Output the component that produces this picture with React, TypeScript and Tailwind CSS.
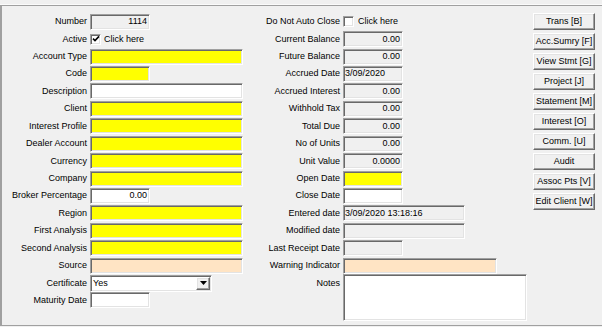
import React from "react";

const sunken =
  "border border-t-[#a0a0a0] border-l-[#a0a0a0] border-r-white border-b-white shadow-[inset_1px_1px_0_#696969,inset_-1px_-1px_0_#e3e3e3]";
const raised =
  "border border-t-white border-l-white border-r-[#696969] border-b-[#696969] shadow-[inset_-1px_-1px_0_#a0a0a0,inset_1px_1px_0_#e3e3e3]";

type FieldProps = {
  w: string;
  bg: string;
  value?: string;
  right?: boolean;
  h?: string;
};

function Field({ w, bg, value, right, h }: FieldProps) {
  return (
    <div
      className={`${w} ${h ?? "h-[16px]"} ${bg} ${sunken} flex items-center overflow-hidden whitespace-nowrap ${
        right ? "justify-end pr-[2px]" : "justify-start pl-[1px]"
      }`}
    >
      {value}
    </div>
  );
}

function Check({ checked }: { checked?: boolean }) {
  return (
    <div className={`w-[11px] h-[11px] bg-white ${sunken} flex items-center justify-center`}>
      {checked && (
        <svg width="8" height="8" viewBox="0 0 8 8">
          <path d="M1 3.6 L3 5.6 L7 1.4" stroke="#000" strokeWidth="1.6" fill="none" />
        </svg>
      )}
    </div>
  );
}

function Label({ children, top }: { children: React.ReactNode; top?: boolean }) {
  return (
    <div
      className={`flex items-center justify-end whitespace-nowrap h-[17.43px] ${top ? "self-start" : ""}`}
    >
      {children}
    </div>
  );
}

function Cell({ children, span }: { children: React.ReactNode; span?: boolean }) {
  return (
    <div className={`flex items-center ${span ? "row-span-2 items-start" : ""}`}>{children}</div>
  );
}

const Y = "bg-[#ffff00]";
const W = "bg-white";
const R = "bg-[#f0f0f0]";
const B = "bg-[#ffe4c4]";

const buttons = [
  "Trans [B]",
  "Acc.Sumry [F]",
  "View Stmt [G]",
  "Project [J]",
  "Statement [M]",
  "Interest [O]",
  "Comm. [U]",
  "Audit",
  "Assoc Pts [V]",
  "Edit Client [W]",
];

export default function App() {
  return (
    <div
      className="w-[602px] h-[327px] bg-[#f0f0f0] overflow-hidden text-[9px] text-black leading-none"
      style={{ fontFamily: '"Liberation Sans", Arial, sans-serif' }}
    >
      <div className="h-[5px] border-b border-b-[#fbfbfb]" />
      <div className="w-[620px] h-[321px] border-t border-t-[#a0a0a0] border-l-2 border-l-[#a0a0a0] border-b border-b-[#a0a0a0] pt-[7px] flex">
        {/* Left column */}
        <div className="grid grid-cols-[85px_153px] grid-rows-[repeat(17,17.43px)] gap-x-[3px]">
          <Label>Number</Label>
          <Cell>
            <Field w="w-[60px]" bg={R} value="1114" right />
          </Cell>
          <Label>Active</Label>
          <Cell>
            <div className="flex items-center gap-[3px]">
              <Check checked />
              <span>Click here</span>
            </div>
          </Cell>
          <Label>Account Type</Label>
          <Cell>
            <Field w="w-[153px]" bg={Y} />
          </Cell>
          <Label>Code</Label>
          <Cell>
            <Field w="w-[60px]" bg={Y} />
          </Cell>
          <Label>Description</Label>
          <Cell>
            <Field w="w-[153px]" bg={W} />
          </Cell>
          <Label>Client</Label>
          <Cell>
            <Field w="w-[153px]" bg={Y} />
          </Cell>
          <Label>Interest Profile</Label>
          <Cell>
            <Field w="w-[153px]" bg={Y} />
          </Cell>
          <Label>Dealer Account</Label>
          <Cell>
            <Field w="w-[153px]" bg={Y} />
          </Cell>
          <Label>Currency</Label>
          <Cell>
            <Field w="w-[153px]" bg={Y} />
          </Cell>
          <Label>Company</Label>
          <Cell>
            <Field w="w-[153px]" bg={Y} />
          </Cell>
          <Label>Broker Percentage</Label>
          <Cell>
            <Field w="w-[60px]" bg={W} value="0.00" right />
          </Cell>
          <Label>Region</Label>
          <Cell>
            <Field w="w-[153px]" bg={Y} />
          </Cell>
          <Label>First Analysis</Label>
          <Cell>
            <Field w="w-[153px]" bg={Y} />
          </Cell>
          <Label>Second Analysis</Label>
          <Cell>
            <Field w="w-[153px]" bg={Y} />
          </Cell>
          <Label>Source</Label>
          <Cell>
            <Field w="w-[153px]" bg={B} />
          </Cell>
          <Label>Certificate</Label>
          <Cell>
            <div className={`w-[122px] h-[17px] bg-white ${sunken} flex items-center justify-between pl-[2px] pr-[1px]`}>
              <span>Yes</span>
              <div className={`w-[14px] h-[13px] bg-[#f0f0f0] ${raised} flex items-center justify-center`}>
                <svg width="7" height="4" viewBox="0 0 7 4">
                  <path d="M0 0 L7 0 L3.5 4 Z" fill="#000" />
                </svg>
              </div>
            </div>
          </Cell>
          <Label>Maturity Date</Label>
          <Cell>
            <Field w="w-[60px]" bg={W} />
          </Cell>
        </div>

        {/* Middle column */}
        <div className="ml-[3px] grid grid-cols-[94px_184px] grid-rows-[repeat(17,17.43px)] gap-x-[3px]">
          <Label>Do Not Auto Close</Label>
          <Cell>
            <div className="flex items-center gap-[4px]">
              <Check />
              <span>Click here</span>
            </div>
          </Cell>
          <Label>Current Balance</Label>
          <Cell>
            <Field w="w-[60px]" bg={R} value="0.00" right />
          </Cell>
          <Label>Future Balance</Label>
          <Cell>
            <Field w="w-[60px]" bg={R} value="0.00" right />
          </Cell>
          <Label>Accrued Date</Label>
          <Cell>
            <Field w="w-[60px]" bg={R} value="3/09/2020" />
          </Cell>
          <Label>Accrued Interest</Label>
          <Cell>
            <Field w="w-[60px]" bg={R} value="0.00" right />
          </Cell>
          <Label>Withhold Tax</Label>
          <Cell>
            <Field w="w-[60px]" bg={R} value="0.00" right />
          </Cell>
          <Label>Total Due</Label>
          <Cell>
            <Field w="w-[60px]" bg={R} value="0.00" right />
          </Cell>
          <Label>No of Units</Label>
          <Cell>
            <Field w="w-[60px]" bg={R} value="0.00" right />
          </Cell>
          <Label>Unit Value</Label>
          <Cell>
            <Field w="w-[60px]" bg={R} value="0.0000" right />
          </Cell>
          <Label>Open Date</Label>
          <Cell>
            <Field w="w-[60px]" bg={Y} />
          </Cell>
          <Label>Close Date</Label>
          <Cell>
            <Field w="w-[60px]" bg={W} />
          </Cell>
          <Label>Entered date</Label>
          <Cell>
            <Field w="w-[122px]" bg={R} value="3/09/2020 13:18:16" />
          </Cell>
          <Label>Modified date</Label>
          <Cell>
            <Field w="w-[122px]" bg={R} />
          </Cell>
          <Label>Last Receipt Date</Label>
          <Cell>
            <Field w="w-[60px]" bg={R} />
          </Cell>
          <Label>Warning Indicator</Label>
          <Cell>
            <Field w="w-[154px]" bg={B} />
          </Cell>
          <Label top>Notes</Label>
          <Cell span>
            <Field w="w-[184px]" h="h-[47px]" bg={W} />
          </Cell>
        </div>

        {/* Buttons */}
        <div className="ml-[6px] flex flex-col gap-[3px]">
          {buttons.map((b) => (
            <div
              key={b}
              className={`w-[62px] h-[17px] bg-[#f0f0f0] ${raised} flex items-center justify-center whitespace-nowrap`}
            >
              {b}
            </div>
          ))}
        </div>
      </div>
    </div>
  );
}
